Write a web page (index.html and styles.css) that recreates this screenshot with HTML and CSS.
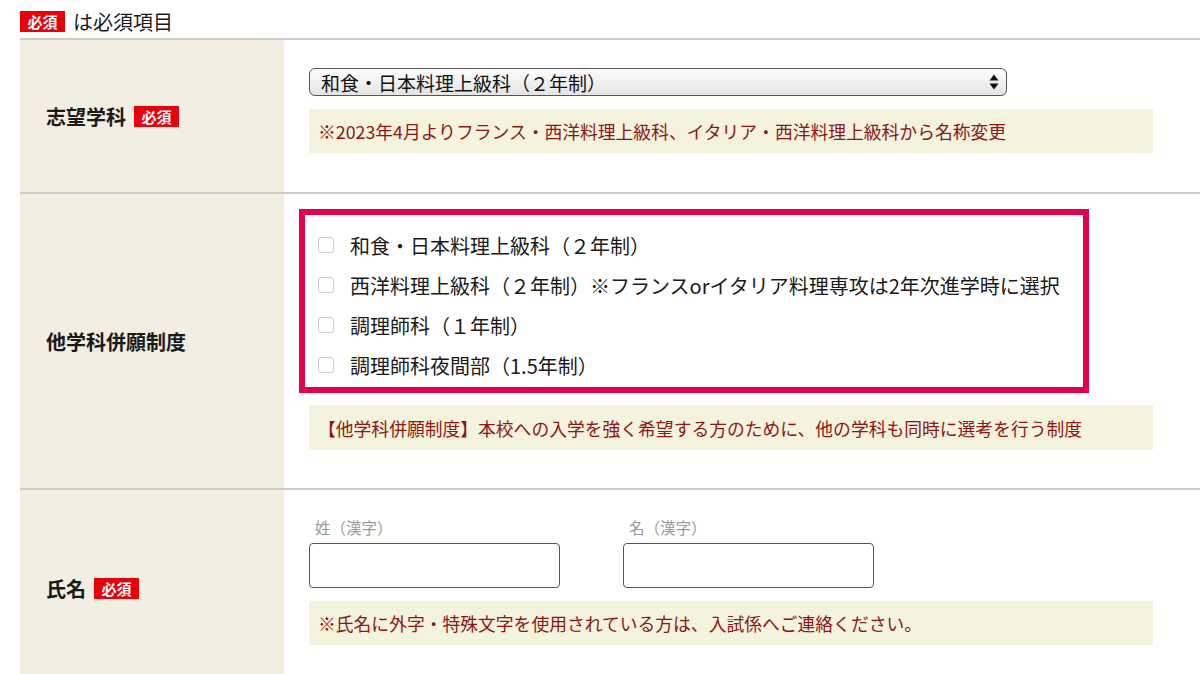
FILE: index.html
```html
<!DOCTYPE html>
<html lang="ja">
<head>
    <meta charset="UTF-8">
    <meta name="viewport" content="width=device-width, initial-scale=1.0">
    <title>出願フォーム</title>
    <link rel="stylesheet" href="styles.css">
</head>
<body>
    <div class="legend"><span class="req">必須</span>は必須項目</div>

    <div class="form">
        <!-- 志望学科 -->
        <div class="row">
            <div class="row-head">志望学科<span class="req">必須</span></div>
            <div class="row-body row-body--course">
                <div class="select-wrap">
                    <select class="select">
                        <option>和食・日本料理上級科（２年制）</option>
                    </select>
                    <svg class="select-arrow" width="10" height="16" viewBox="0 0 10 16">
                        <path d="M5 0.5 L9.5 6.5 H0.5 Z" fill="#111"/>
                        <path d="M5 15.5 L9.5 9.5 H0.5 Z" fill="#111"/>
                    </svg>
                </div>
                <p class="note">※2023年4月よりフランス・西洋料理上級科、イタリア・西洋料理上級科から名称変更</p>
            </div>
        </div>

        <!-- 他学科併願制度 -->
        <div class="row">
            <div class="row-head">他学科併願制度</div>
            <div class="row-body row-body--other">
                <ul class="checks">
                    <li><span class="check"></span>和食・日本料理上級科（２年制）</li>
                    <li><span class="check"></span>西洋料理上級科（２年制）※フランスorイタリア料理専攻は2年次進学時に選択</li>
                    <li><span class="check"></span>調理師科（１年制）</li>
                    <li><span class="check"></span>調理師科夜間部（1.5年制）</li>
                </ul>
                <p class="note">【他学科併願制度】本校への入学を強く希望する方のために、他の学科も同時に選考を行う制度</p>
            </div>
        </div>

        <!-- 氏名 -->
        <div class="row">
            <div class="row-head">氏名<span class="req">必須</span></div>
            <div class="row-body row-body--name">
                <div class="names">
                    <label class="field">
                        <span class="field-label">姓（漢字）</span>
                        <input class="input" type="text">
                    </label>
                    <label class="field">
                        <span class="field-label">名（漢字）</span>
                        <input class="input" type="text">
                    </label>
                </div>
                <p class="note">※氏名に外字・特殊文字を使用されている方は、入試係へご連絡ください。</p>
            </div>
        </div>
    </div>
</body>
</html>
```

FILE: styles.css
```css
html, body, ul, p {
    margin: 0;
    padding: 0;
}
body {
    padding-left: 20px;
    background: #fff;
    color: #1a1a1a;
    font-family: "Noto Sans CJK JP", "Noto Sans", sans-serif;
    overflow: hidden;
}
.req {
    display: inline-flex;
    justify-content: center;
    align-items: center;
    width: 45px;
    height: 21px;
    background: #e8000b;
    color: #fff;
    font-size: 15px;
    font-weight: bold;
    line-height: 1;
}
.legend {
    box-sizing: border-box;
    display: flex;
    align-items: center;
    gap: 8px;
    height: 38px;
    padding-top: 4px;
    font-size: 20px;
}
.row {
    display: grid;
    grid-template-columns: 264px 1fr;
    border-top: 2px solid #cbcbcb;
}
.row-head {
    display: flex;
    align-items: center;
    gap: 8px;
    padding-left: 26px;
    background: #f3eee2;
    font-size: 20px;
    font-weight: bold;
}
.row-body {
    padding: 28px 47px 39px 25px;
}
.note {
    display: flex;
    align-items: center;
    height: 44px;
    padding: 0 9px;
    background: #f4f3dd;
    color: #8e1616;
    font-size: 17.8px;
}

/* 志望学科 */
.select-wrap {
    position: relative;
    width: 698px;
}
.select {
    box-sizing: border-box;
    display: block;
    width: 100%;
    height: 28px;
    padding: 0 30px 0 11px;
    border: 1px solid #555;
    border-radius: 6px;
    background: linear-gradient(#fdfdfd, #e4e4e4);
    color: #111;
    font-family: inherit;
    font-size: 19px;
    -webkit-appearance: none;
    appearance: none;
}
.select-arrow {
    position: absolute;
    top: 6px;
    right: 8px;
}
.row-body--course .note {
    margin-top: 13px;
}

/* 他学科併願制度 */
.row-body--other {
    padding-top: 15px;
    padding-bottom: 38px;
}
.checks {
    box-sizing: border-box;
    width: 790px;
    margin-left: -10px;
    padding: 10px 0 2px 13px;
    border: 6px solid #e0024e;
    list-style: none;
}
.checks li {
    display: flex;
    align-items: center;
    gap: 16px;
    height: 40px;
    font-size: 20px;
}
.check {
    box-sizing: border-box;
    width: 16px;
    height: 16px;
    border: 1px solid #cfcfcf;
    border-radius: 3px;
    background: #fff;
    box-shadow: inset 0 1px 1px rgba(0, 0, 0, 0.06);
}
.row-body--other .note {
    height: 45px;
    margin-top: 12px;
}

/* 氏名 */
.row-body--name {
    padding-top: 27px;
    padding-bottom: 41px;
}
.names {
    display: flex;
    gap: 63px;
}
.field {
    display: flex;
    flex-direction: column;
    width: 251px;
}
.field-label {
    padding-left: 6px;
    margin-bottom: 6px;
    color: #9a9a9a;
    font-size: 15.5px;
    line-height: 20px;
}
.input {
    box-sizing: border-box;
    width: 100%;
    height: 45px;
    border: 1.5px solid #555;
    border-radius: 4px;
    background: #fff;
}
.row-body--name .note {
    margin-top: 13px;
}
```
